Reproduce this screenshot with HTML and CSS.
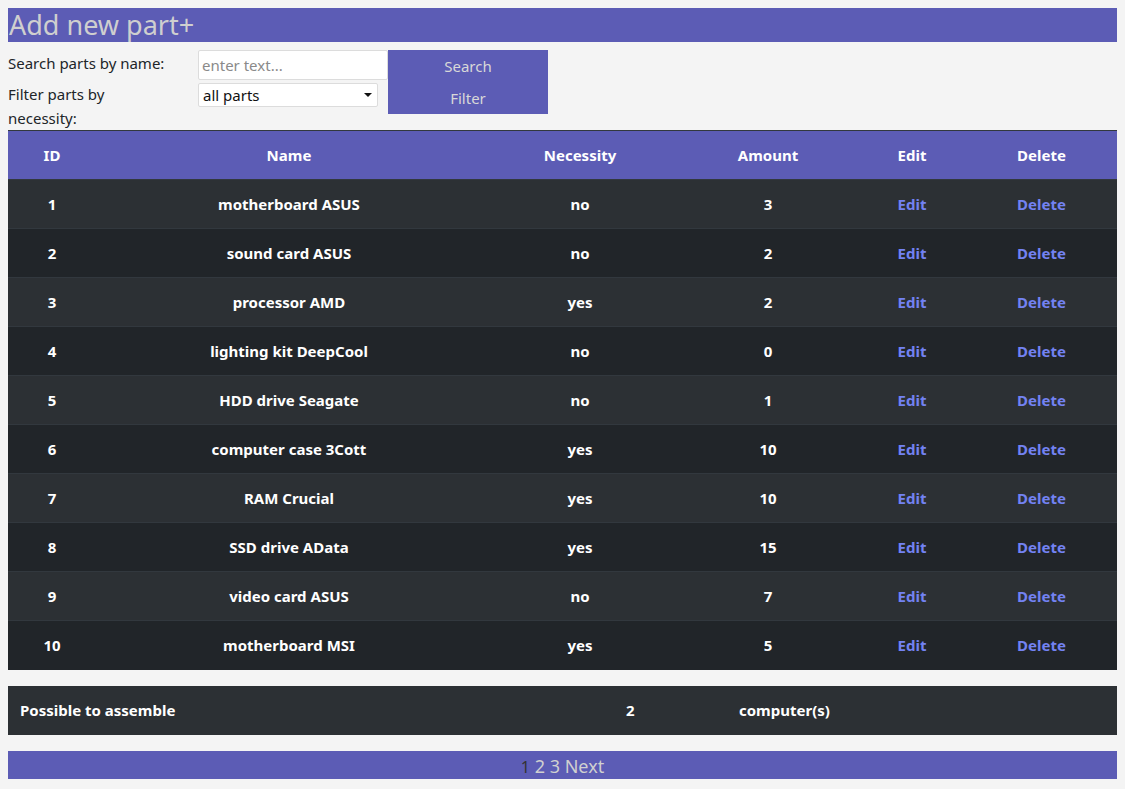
FILE: index.html
```html
<!DOCTYPE html>
<html>
<head>
<meta charset="utf-8">
<link rel="stylesheet" href="styles.css">
</head>
<body>
<div class="topbar"><a class="add-link" href="#">Add new part+</a></div>

<form class="filters">
  <label class="lbl">Search parts by name:</label>
  <input class="text-input" type="text" placeholder="enter text...">
  <button class="btn" type="button">Search</button>
  <label class="lbl lbl-2">Filter parts by necessity:</label>
  <div class="select-cell"><select class="sel"><option>all parts</option><option>necessary</option><option>optional</option></select></div>
  <button class="btn" type="button">Filter</button>
</form>

<table class="parts">
  <thead>
    <tr><th class="c-id">ID</th><th class="c-name">Name</th><th class="c-nec">Necessity</th><th class="c-amt">Amount</th><th class="c-edit">Edit</th><th class="c-del">Delete</th></tr>
  </thead>
  <tbody>
    <tr><td>1</td><td>motherboard ASUS</td><td>no</td><td>3</td><td><a href="#">Edit</a></td><td><a href="#">Delete</a></td></tr>
    <tr><td>2</td><td>sound card ASUS</td><td>no</td><td>2</td><td><a href="#">Edit</a></td><td><a href="#">Delete</a></td></tr>
    <tr><td>3</td><td>processor AMD</td><td>yes</td><td>2</td><td><a href="#">Edit</a></td><td><a href="#">Delete</a></td></tr>
    <tr><td>4</td><td>lighting kit DeepCool</td><td>no</td><td>0</td><td><a href="#">Edit</a></td><td><a href="#">Delete</a></td></tr>
    <tr><td>5</td><td>HDD drive Seagate</td><td>no</td><td>1</td><td><a href="#">Edit</a></td><td><a href="#">Delete</a></td></tr>
    <tr><td>6</td><td>computer case 3Cott</td><td>yes</td><td>10</td><td><a href="#">Edit</a></td><td><a href="#">Delete</a></td></tr>
    <tr><td>7</td><td>RAM Crucial</td><td>yes</td><td>10</td><td><a href="#">Edit</a></td><td><a href="#">Delete</a></td></tr>
    <tr><td>8</td><td>SSD drive AData</td><td>yes</td><td>15</td><td><a href="#">Edit</a></td><td><a href="#">Delete</a></td></tr>
    <tr><td>9</td><td>video card ASUS</td><td>no</td><td>7</td><td><a href="#">Edit</a></td><td><a href="#">Delete</a></td></tr>
    <tr><td>10</td><td>motherboard MSI</td><td>yes</td><td>5</td><td><a href="#">Edit</a></td><td><a href="#">Delete</a></td></tr>
  </tbody>
</table>

<div class="summary">
  <div class="s-label">Possible to assemble</div>
  <div class="s-num">2</div>
  <div class="s-unit">computer(s)</div>
</div>

<div class="pager">
  <span class="page current">1</span>
  <a class="page" href="#">2</a>
  <a class="page" href="#">3</a>
  <a class="page" href="#">Next</a>
</div>
</body>
</html>
```

FILE: styles.css
```css
* { box-sizing: border-box; }

body {
  margin: 8px;
  background: #f4f4f4;
  font-family: "Noto Sans", "Open Sans", sans-serif;
  font-size: 15px;
  color: #212529;
}

.topbar {
  background: #5c5cb5;
  height: 34px;
  padding-left: 1px;
}

.add-link {
  color: #cfcfcf;
  text-decoration: none;
  font-size: 27px;
  line-height: 34px;
}

.filters {
  display: grid;
  grid-template-columns: 190px 190px 160px;
  grid-template-rows: 32px 48px;
  margin-top: 8px;
}

.lbl {
  width: 160px;
  line-height: 24px;
  padding-top: 1px;
}

.lbl-2 { padding-top: 0; }

.text-input {
  height: 30px;
  border: 1px solid #dcdcdc;
  border-radius: 2px;
  padding: 0 3px;
  font-family: inherit;
  font-size: 15px;
  color: #333;
  background: #fff;
}

.text-input::placeholder { color: #8a8a8a; }

.select-cell {
  position: relative;
  width: 180px;
  height: 25px;
  padding-top: 1px;
}

.select-cell::after {
  content: "";
  position: absolute;
  right: 6px;
  top: 11px;
  border-left: 4px solid transparent;
  border-right: 4px solid transparent;
  border-top: 4px solid #111;
  pointer-events: none;
}

.sel {
  appearance: none;
  -webkit-appearance: none;
  width: 180px;
  height: 24px;
  border: 1px solid #dcdcdc;
  border-radius: 2px;
  padding: 0 4px;
  font-family: inherit;
  font-size: 15px;
  background: #fff;
  color: #111;
}

.btn {
  height: 32px;
  border: 0;
  background: #5c5cb5;
  color: #d8d8d8;
  font-family: inherit;
  font-size: 15px;
}

.parts {
  width: 100%;
  border-collapse: collapse;
  table-layout: fixed;
  color: #fff;
  font-weight: bold;
  text-align: center;
}

.parts th {
  background: #5c5cb5;
  height: 49px;
  border-top: 1px solid #32383e;
  padding: 0;
}

.c-id { width: 88px; }
.c-name { width: 386px; }
.c-nec { width: 196px; }
.c-amt { width: 180px; }
.c-edit { width: 108px; }
.c-del { width: 151px; }

.parts td {
  height: 49px;
  padding: 0;
  border-top: 1px solid #32383e;
  background: #212529;
}

.parts tbody tr:nth-child(odd) td { background: #2c3034; }

.parts a {
  color: #7382f2;
  text-decoration: none;
}

.summary {
  margin-top: 16px;
  height: 49px;
  background: #2c3034;
  color: #fff;
  font-weight: bold;
  display: grid;
  grid-template-columns: 606px 113px 1fr;
  align-items: center;
}

.summary > div { padding-left: 12px; }

.pager {
  margin-top: 16px;
  height: 28px;
  background: #5c5cb5;
  text-align: center;
  font-size: 18px;
  line-height: 30px;
}

.page {
  color: #d0d0d0;
  text-decoration: none;
}

.page.current { color: #333; font-size: 16px; }
```
